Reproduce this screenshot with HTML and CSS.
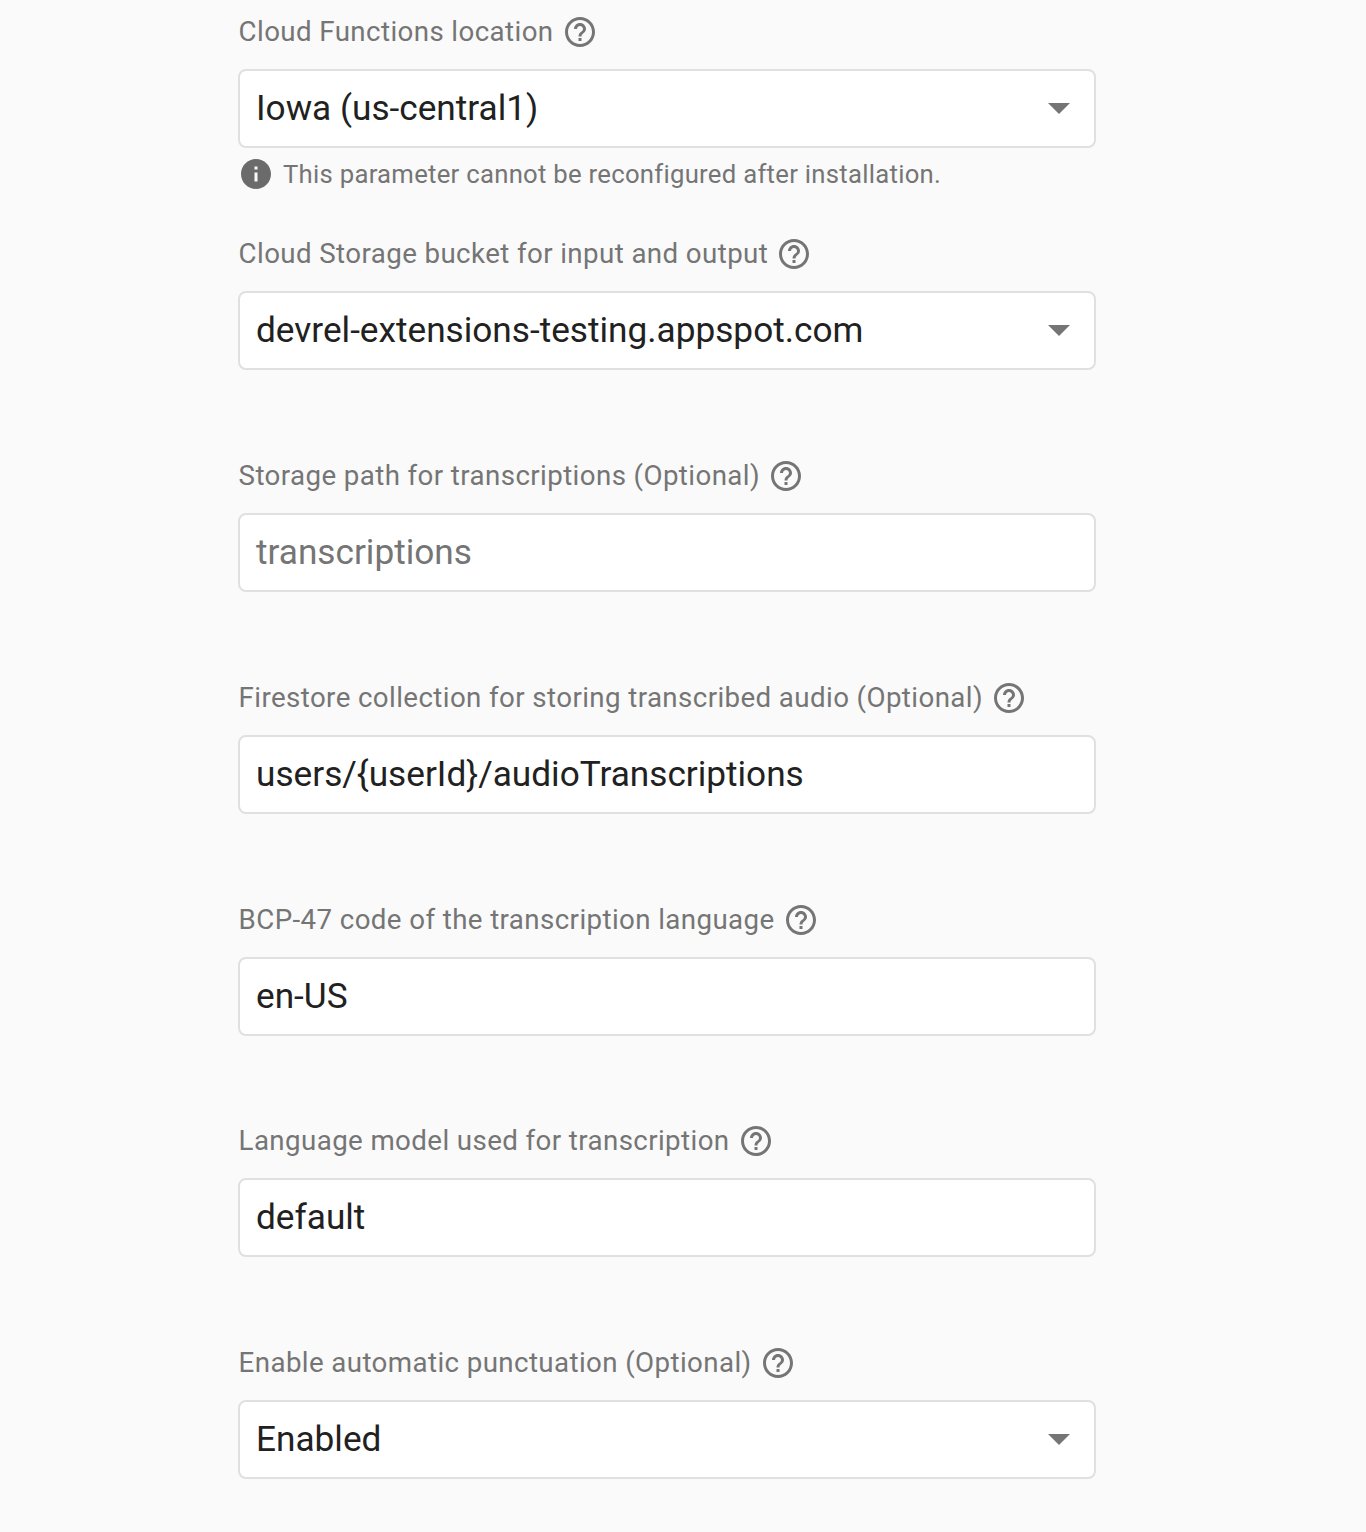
FILE: index.html
```html
<!DOCTYPE html>
<html lang="en">
<head>
<meta charset="utf-8">
<title>Configure extension</title>
<link rel="stylesheet" href="styles.css">
</head>
<body>
<svg class="sprite" width="0" height="0" aria-hidden="true">
  <symbol id="help" viewBox="0 0 24 24"><path d="M11 18h2v-2h-2v2zm1-16C6.48 2 2 6.48 2 12s4.48 10 10 10 10-4.48 10-10S17.52 2 12 2zm0 18c-4.41 0-8-3.59-8-8s3.59-8 8-8 8 3.59 8 8-3.59 8-8 8zm0-14c-2.21 0-4 1.79-4 4h2c0-1.1.9-2 2-2s2 .9 2 2c0 2-3 1.75-3 5h2c0-2.25 3-2.5 3-5 0-2.21-1.79-4-4-4z"/></symbol>
  <symbol id="info" viewBox="0 0 24 24"><path d="M12 2C6.48 2 2 6.48 2 12s4.48 10 10 10 10-4.48 10-10S17.52 2 12 2zm1 15h-2v-6h2v6zm0-8h-2V7h2v2z"/></symbol>
</svg>
<main class="form">
  <section class="field">
    <div class="label"><span>Cloud Functions location</span><svg class="icon"><use href="#help"/></svg></div>
    <div class="control select"><span>Iowa (us-central1)</span><i class="caret"></i></div>
    <p class="hint"><svg class="hint-icon"><use href="#info"/></svg><span>This parameter cannot be reconfigured after installation.</span></p>
  </section>
  <section class="field">
    <div class="label"><span>Cloud Storage bucket for input and output</span><svg class="icon"><use href="#help"/></svg></div>
    <div class="control select"><span>devrel-extensions-testing.appspot.com</span><i class="caret"></i></div>
  </section>
  <section class="field">
    <div class="label"><span>Storage path for transcriptions (Optional)</span><svg class="icon"><use href="#help"/></svg></div>
    <div class="control placeholder"><span>transcriptions</span></div>
  </section>
  <section class="field">
    <div class="label"><span>Firestore collection for storing transcribed audio (Optional)</span><svg class="icon"><use href="#help"/></svg></div>
    <div class="control"><span>users/{userId}/audioTranscriptions</span></div>
  </section>
  <section class="field">
    <div class="label"><span>BCP-47 code of the transcription language</span><svg class="icon"><use href="#help"/></svg></div>
    <div class="control"><span>en-US</span></div>
  </section>
  <section class="field">
    <div class="label"><span>Language model used for transcription</span><svg class="icon"><use href="#help"/></svg></div>
    <div class="control"><span>default</span></div>
  </section>
  <section class="field">
    <div class="label"><span>Enable automatic punctuation (Optional)</span><svg class="icon"><use href="#help"/></svg></div>
    <div class="control select"><span>Enabled</span><i class="caret"></i></div>
  </section>
</main>
</body>
</html>
```
FILE: styles.css
```css
html, body {
  margin: 0;
  padding: 0;
  background: #fafafa;
}
body {
  font-family: Roboto, "Liberation Sans", sans-serif;
  height: 1532px;
  overflow: hidden;
}
.sprite {
  display: block;
  height: 0;
}
.form {
  width: 858px;
  margin-left: 238px;
  padding-top: 13.4px;
}
.field {
  height: 221.8px;
}
.label {
  display: flex;
  align-items: center;
  gap: 8px;
  height: 38px;
  padding-left: 0.6px;
  font-size: 27.7px;
  line-height: 38px;
  letter-spacing: 0.4px;
  color: #757575;
}
.icon {
  width: 36px;
  height: 36px;
  fill: #757575;
}
.control {
  box-sizing: border-box;
  display: flex;
  align-items: center;
  justify-content: space-between;
  height: 79px;
  margin-top: 18px;
  padding: 0 24px 1px 16px;
  background: #fff;
  border: 2px solid #e0e0e0;
  border-radius: 8px;
  font-size: 35.2px;
  color: #212121;
}
.placeholder {
  color: #757575;
}
.caret {
  width: 0;
  height: 0;
  border-left: 11.5px solid transparent;
  border-right: 11.5px solid transparent;
  border-top: 11.5px solid #757575;
}
.hint {
  display: flex;
  align-items: center;
  gap: 9px;
  margin: 6.6px 0 0 0;
  height: 38px;
  font-size: 25.7px;
  letter-spacing: 0.27px;
  color: #757575;
}
.hint-icon {
  width: 36px;
  height: 36px;
  fill: #6b6b6b;
}
```
